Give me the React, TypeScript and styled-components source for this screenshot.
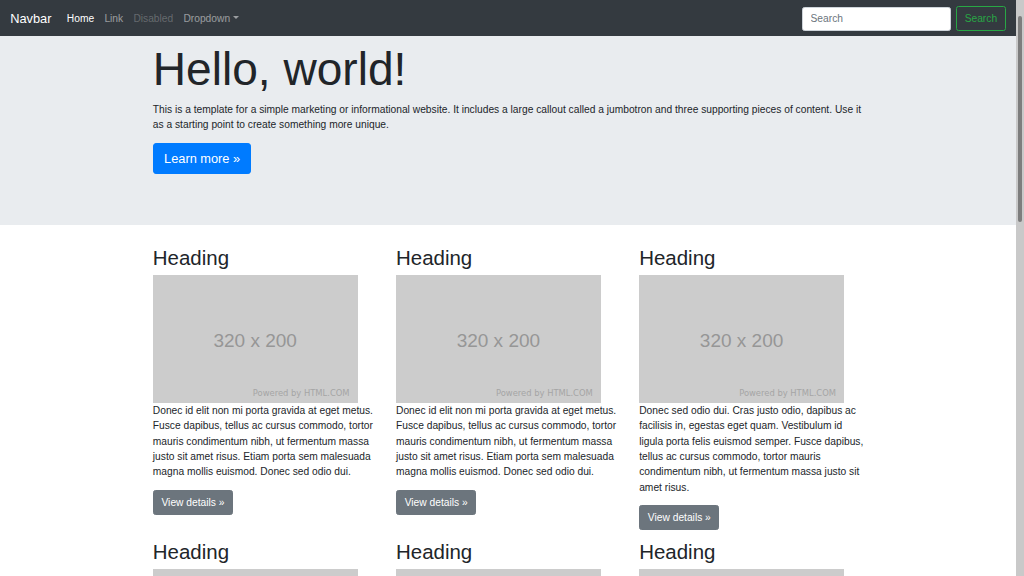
import React from "react";
import styled, { createGlobalStyle } from "styled-components";

const GlobalStyle = createGlobalStyle`
  body {
    margin: 0;
    padding-right: 8px;
    font-family: "Liberation Sans", Arial, sans-serif;
    font-size: 10.24px;
    line-height: 1.5;
    color: #212529;
    background: #fff;
  }
  * {
    box-sizing: border-box;
  }
`;

// window scrollbar, as captured in the screenshot
const ScrollTrack = styled.div`
  position: fixed;
  top: 0;
  right: 0;
  bottom: 0;
  width: 8px;
  z-index: 20;
  background: #c9c9c9;
`;

const ScrollThumb = styled.div`
  width: 4px;
  height: 206px;
  margin: 16px auto 0;
  border-radius: 2px;
  background: #7d7d7d;
`;

const NavBar = styled.nav`
  position: fixed;
  top: 0;
  left: 0;
  right: 8px;
  z-index: 10;
  height: 36px;
  display: flex;
  align-items: center;
  justify-content: space-between;
  padding: 6px 10.24px 4.5px;
  background: #343a40;
`;

const NavLeft = styled.div`
  display: flex;
  align-items: center;
`;

const Brand = styled.a`
  font-size: 12.8px;
  line-height: 1.5;
  color: #fff;
  margin-right: 10.24px;
  text-decoration: none;
`;

const NavLink = styled.a<{ $state?: "active" | "disabled" }>`
  padding: 5.12px;
  text-decoration: none;
  color: ${(p) =>
    p.$state === "active"
      ? "#fff"
      : p.$state === "disabled"
        ? "rgba(255,255,255,.25)"
        : "rgba(255,255,255,.5)"};
`;

const Caret = styled.span`
  display: inline-block;
  margin-left: 2.6px;
  vertical-align: 2.6px;
  border-top: 3.1px solid;
  border-right: 3.1px solid transparent;
  border-left: 3.1px solid transparent;
`;

const SearchForm = styled.form`
  display: flex;
  align-items: center;
`;

const SearchInput = styled.input`
  width: 149px;
  height: 24.3px;
  padding: 3.84px 7.68px;
  margin-right: 5.12px;
  font: inherit;
  color: #495057;
  background: #fff;
  border: 1px solid #ced4da;
  border-radius: 2.56px;
  &::placeholder {
    color: #6c757d;
  }
`;

const Button = styled.button<{ $variant: "outline" | "primary" | "secondary"; $large?: boolean }>`
  font-family: inherit;
  font-size: ${(p) => (p.$large ? "12.8px" : "10.24px")};
  line-height: 1.5;
  padding: ${(p) => (p.$large ? "5.12px 10.24px" : "3.84px 7.68px")};
  border-radius: ${(p) => (p.$large ? "3.07px" : "2.56px")};
  border: 1px solid
    ${(p) =>
      p.$variant === "outline" ? "#28a745" : p.$variant === "primary" ? "#007bff" : "#6c757d"};
  background: ${(p) =>
    p.$variant === "outline" ? "transparent" : p.$variant === "primary" ? "#007bff" : "#6c757d"};
  color: ${(p) => (p.$variant === "outline" ? "#28a745" : "#fff")};
`;

const Jumbotron = styled.div`
  background: #e9ecef;
  padding: 42px 0 41px;
  margin-bottom: 20.48px;
`;

const Container = styled.div`
  width: 729.6px;
  margin: 0 auto;
  padding: 0 9.6px;
`;

const Display = styled.h1`
  font-size: 46.08px;
  font-weight: 400;
  line-height: 1.2;
  margin: 0 0 4.6px;
`;

const Text = styled.p`
  margin: 0 0 10.24px;
`;

const Row = styled.div`
  display: grid;
  grid-template-columns: repeat(3, 243.2px);
  margin: 0 -9px;
`;

const Col = styled.div`
  padding: 0 9px;
`;

const Heading = styled.h2`
  font-size: 20.48px;
  font-weight: 400;
  line-height: 1.2;
  margin: 0 0 4.4px;
`;

const Placeholder = styled.div`
  position: relative;
  width: 204.8px;
  height: 128px;
  padding-top: 4px;
  background: #cccccc;
  display: flex;
  align-items: center;
  justify-content: center;
  color: #969696;
  font-size: 19px;
`;

const Credit = styled.span`
  position: absolute;
  right: 8px;
  bottom: 3px;
  font-family: "DejaVu Sans", sans-serif;
  font-size: 8.4px;
  color: #a5a5a5;
`;

const Rule = styled.hr`
  margin: 10.24px 0;
  border: 0;
  border-top: 1px solid rgba(0, 0, 0, 0.1);
`;

const textA =
  "Donec id elit non mi porta gravida at eget metus. Fusce dapibus, tellus ac cursus commodo, tortor mauris condimentum nibh, ut fermentum massa justo sit amet risus. Etiam porta sem malesuada magna mollis euismod. Donec sed odio dui.";
const textB =
  "Donec sed odio dui. Cras justo odio, dapibus ac facilisis in, egestas eget quam. Vestibulum id ligula porta felis euismod semper. Fusce dapibus, tellus ac cursus commodo, tortor mauris condimentum nibh, ut fermentum massa justo sit amet risus.";

const cards = [textA, textA, textB, textA, textA, textB];

export default function App() {
  return (
    <>
      <GlobalStyle />
      <NavBar>
        <NavLeft>
          <Brand href="#">Navbar</Brand>
          <NavLink $state="active" href="#">Home</NavLink>
          <NavLink href="#">Link</NavLink>
          <NavLink $state="disabled" href="#">Disabled</NavLink>
          <NavLink href="#">
            Dropdown<Caret />
          </NavLink>
        </NavLeft>
        <SearchForm onSubmit={(e) => e.preventDefault()}>
          <SearchInput placeholder="Search" />
          <Button $variant="outline" type="submit">Search</Button>
        </SearchForm>
      </NavBar>
      <main>
        <Jumbotron>
          <Container>
            <Display>Hello, world!</Display>
            <Text>
              This is a template for a simple marketing or informational website. It includes a
              large callout called a jumbotron and three supporting pieces of content. Use it as a
              starting point to create something more unique.
            </Text>
            <Text>
              <Button $variant="primary" $large>Learn more »</Button>
            </Text>
          </Container>
        </Jumbotron>
        <Container>
          <Row>
            {cards.map((text, index) => (
              <Col key={index}>
                <Heading>Heading</Heading>
                <Placeholder>
                  320 x 200
                  <Credit>Powered by HTML.COM</Credit>
                </Placeholder>
                <Text>{text}</Text>
                <Text>
                  <Button $variant="secondary">View details »</Button>
                </Text>
              </Col>
            ))}
          </Row>
          <Rule />
        </Container>
      </main>
      <Container as="footer">
        <Text>© Company 2017-2018</Text>
      </Container>
      <ScrollTrack>
        <ScrollThumb />
      </ScrollTrack>
    </>
  );
}
